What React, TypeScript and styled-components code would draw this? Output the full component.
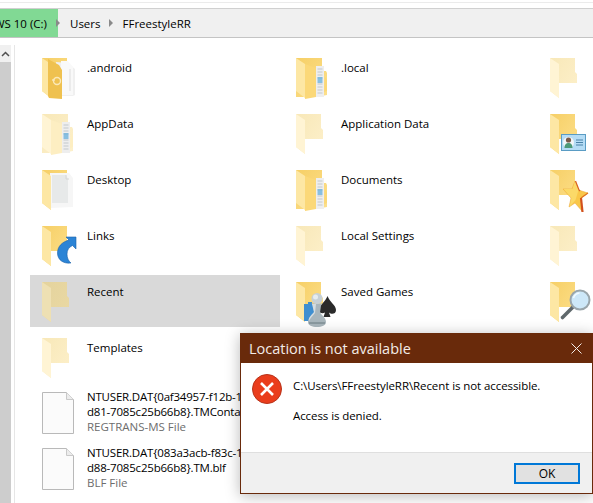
import React from "react";
import styled, { createGlobalStyle } from "styled-components";

type Tone = "normal" | "hidden" | "selected";
type Badge = "android" | "docs" | "desktop" | "shortcut" | "card" | "star" | "chess" | "lens";

const tones = {
	normal: { backA: "#f6cf66", backB: "#fde08c", flap: "#fde7a4", flapB: "#fbd878" },
	hidden: { backA: "#f8e8b8", backB: "#fdf0cb", flap: "#fff4d4", flapB: "#fdeec2" },
	selected: { backA: "#e4d39d", backB: "#ead9a4", flap: "#eee0b3", flapB: "#e8d8a4" }
};

const GlobalStyle = createGlobalStyle`
	html, body {
		margin: 0;
		background: #ffffff;
		overflow: hidden;
	}
	body {
		font-family: "Open Sans", "Noto Sans", sans-serif;
		font-size: 11.5px;
		color: #000000;
	}
`;

function DocSheet() {
	return (
		<g>
			<rect x="26" y="13" width="8" height="31" fill="#eeeeee" />
			<path d="M27.5 16h5M27.5 19h5M27.5 22h5M27.5 25h5M27.5 31h5M27.5 34h5M27.5 37h5M27.5 40h5" stroke="#c2c8cc" strokeWidth="1" />
			<rect x="27.5" y="24" width="5" height="6" fill="#6fb3dd" opacity="0.8" />
		</g>
	);
}

function Overlay({ badge }: { badge?: Badge }) {
	switch (badge) {
		case "android":
			return (
				<g>
					<path d="M20 9l12 1 7 6v26l-2 1H20z" fill="#f0f0f0" />
					<path d="M25 8h7l5 6v28H25z" fill="#f9f9f9" />
					<path d="M34 16v22" stroke="#dddddd" strokeWidth="1" />
					<path d="M12 9l11 6 3 5v29l-13-1-1-2z" fill="#efc14f" transform="translate(0 -3)" />
					<circle cx="21" cy="28" r="3.5" fill="none" stroke="#fbe9b8" strokeWidth="1.4" />
					<path d="M16 27h3" stroke="#fbe9b8" strokeWidth="1.4" />
				</g>
			);
		case "desktop":
			return (
				<g>
					<path d="M14 8h19l4 5v29l-23 1z" fill="#f6f6f6" />
					<path d="M16 10h14l2 4v24H16z" fill="#e7e9e9" />
					<path d="M30 10v4h3" fill="none" stroke="#d6d6d6" />
				</g>
			);
		case "shortcut":
			return (
				<g>
					<path d="M27 43l-2-12 6-7 9 1v16l-7 2z" fill="#ffffff" />
					<path d="M30 16h10v12l-3.500-3.500c-3.500 1.500-5.500 4.500-5.500 8.500 0 4 1.500 7 4 9-7.500 1-13.500-3-13.500-10 0-6.500 4.500-11 11.500-13z" fill="#2b84d6" stroke="#1c62a8" strokeWidth="0.6" />
				</g>
			);
		case "card":
			return (
				<g>
					<rect x="17.5" y="25.5" width="24" height="16" fill="#b5dcf5" stroke="#5a9cc4" />
					<circle cx="24.5" cy="33.5" r="5.5" fill="#f2f6f8" />
					<circle cx="24.5" cy="31" r="2.6" fill="#7a5a48" />
					<path d="M20.5 39c0-4 2-5 4-5s4 1 4 5z" fill="#4d9a78" />
					<path d="M32 31h7M32 33.5h7M32 36h7" stroke="#4a82a8" strokeWidth="1" />
				</g>
			);
		case "star":
			return (
				<g>
					<path d="M31 16l3.500 9 9.500 3-7 5 1 13-7-8-6 4 2-9-8-9 9 0z" fill="#f9c749" stroke="#eba437" strokeWidth="0.5" />
					<path d="M31 16l3.500 9-3 10-6 7 2-9-8-9 9 0z" fill="#fbd968" />
					<path d="M31.500 16l3.500 9 1 1" fill="none" stroke="#d9601f" strokeWidth="1.200" />
					<path d="M37 33l1.500 14" fill="none" stroke="#d2501c" strokeWidth="2.200" />
					<path d="M44 28l-7 5" fill="none" stroke="#e0741f" strokeWidth="1.200" />
				</g>
			);
		case "chess":
			return (
				<g>
					<path d="M14 27h4v-2h4v2h4v17H14z" fill="#3f8fd0" />
					<path d="M37.500 19c2 6 8.500 9 8.500 14 0 4-4.500 5-7 2.500l1.500 4.500h-7l1.500-4.500c-2 1.500-6 1-6-2.500 0-5 6.500-8 8.500-14z" fill="#2a2a2a" />
					<path d="M21.500 26.500h11l-1.500 2-1 7c2 3 6 5.500 6 9.500 0 3.500-4 5-9 5s-9-1.500-9-5c0-4 4-6.500 6-9.500l-1-7z" fill="#a9b6bc" />
					<path d="M22 27h4l-1 9c-2 3-5 5-6 8-1-4 3-6 5-9z" fill="#d4dce0" />
					<circle cx="27" cy="21.500" r="5.500" fill="#c6d0d5" />
					<circle cx="25.500" cy="20" r="2.500" fill="#e6ecef" />
					<path d="M19 46h16" stroke="#808f96" strokeWidth="1.500" />
				</g>
			);
		case "lens":
			return (
				<g>
					<path d="M28.500 30.500l-10 10" stroke="#5f686c" strokeWidth="3.600" strokeLinecap="round" />
					<circle cx="36" cy="23" r="9.500" fill="#cde8f8" stroke="#9aa6ab" strokeWidth="2" />
					<path d="M29.500 21a7 7 0 0 1 6-5" stroke="#f2fbff" strokeWidth="1.500" fill="none" />
				</g>
			);
		default:
			return null;
	}
}

function FolderIcon({ tone, badge }: { tone: Tone; badge?: Badge }) {
	const c = tones[tone];
	const id = `fold-${tone}`;
	const isDocs = badge === "docs";
	return (
		<IconSvg viewBox="0 0 48 48">
			<defs>
				<linearGradient id={id} x1="0" y1="0" x2="1" y2="1">
					<stop offset="0" stopColor={c.backA} />
					<stop offset="1" stopColor={c.backB} />
				</linearGradient>
			</defs>
			{isDocs ? (
				<g>
					<path d="M6 5h26v13l4 0 1 2v22l-11 2H6z" fill={`url(#${id})`} />
					<DocSheet />
					<path d="M35 24l2 3v11l-3 1z" fill={c.flapB} />
					<path d="M15 11l11 4v29l-11 2z" fill={c.flapB} />
					<path d="M6 5l9 6v34l-9-7z" fill={c.flap} />
				</g>
			) : (
				<g>
					<path d="M6 5h25v14l2 2v9H15v15L6 38z" fill={`url(#${id})`} />
					<Overlay badge={badge === "desktop" ? "desktop" : undefined} />
					<path d="M6 5l9 6v34l-9-7z" fill={c.flap} />
					{badge !== "desktop" && <Overlay badge={badge} />}
				</g>
			)}
		</IconSvg>
	);
}

function FileIcon() {
	return (
		<IconSvg viewBox="0 0 48 48">
			<path d="M6.500 3.500h24l7 7v34h-31z" fill="#fbfbfb" stroke="#b9b9b9" />
			<path d="M30.500 3.500v7h7" fill="#ececec" stroke="#c9c9c9" />
		</IconSvg>
	);
}

const folders: { name?: string; tone: Tone; badge?: Badge; selected?: boolean }[] = [
	{ name: ".android", tone: "normal", badge: "android" },
	{ name: ".local", tone: "normal", badge: "docs" },
	{ tone: "hidden" },
	{ name: "AppData", tone: "hidden", badge: "docs" },
	{ name: "Application Data", tone: "hidden" },
	{ tone: "normal", badge: "card" },
	{ name: "Desktop", tone: "normal", badge: "desktop" },
	{ name: "Documents", tone: "normal", badge: "docs" },
	{ tone: "normal", badge: "star" },
	{ name: "Links", tone: "normal", badge: "shortcut" },
	{ name: "Local Settings", tone: "hidden" },
	{ tone: "hidden" },
	{ name: "Recent", tone: "selected", selected: true },
	{ name: "Saved Games", tone: "normal", badge: "chess" },
	{ tone: "normal", badge: "lens" },
	{ name: "Templates", tone: "hidden" }
];

const files = [
	{ lines: ["NTUSER.DAT{0af34957-f12b-11e9-", "d81-7085c25b66b8}.TMContainer"], kind: "REGTRANS-MS File" },
	{ lines: ["NTUSER.DAT{083a3acb-f83c-11e9-", "d88-7085c25b66b8}.TM.blf"], kind: "BLF File" }
];

export default function App() {
	return (
		<>
			<GlobalStyle />
			<Page>
				<TopRule />
				<AddressBar>
					<DriveCrumb>WINDOWS 10 (C:)</DriveCrumb>
					<Chevron viewBox="0 0 8 8">
						<path d="M2 0l4 4-4 4z" />
					</Chevron>
					<Crumb>Users</Crumb>
					<Chevron viewBox="0 0 8 8">
						<path d="M2 0l4 4-4 4z" />
					</Chevron>
					<Crumb>FFreestyleRR</Crumb>
				</AddressBar>
				<Main>
					<Sidebar>
						<ScrollUp>
							<svg width="9" height="6" viewBox="0 0 9 6">
								<path d="M1 5l3.500-3.500L8 5" fill="none" stroke="#505050" strokeWidth="1.500" />
							</svg>
						</ScrollUp>
					</Sidebar>
					<PaneRule />
					<FileGrid>
						{folders.map((f, i) => (
							<Tile key={i} $selected={f.selected}>
								<FolderIcon tone={f.tone} badge={f.badge} />
								<Name>{f.name}</Name>
							</Tile>
						))}
						{files.map((f) => (
							<FileTile key={f.kind}>
								<FileIcon />
								<FileInfo>
									<FileName>{f.lines[0]}</FileName>
									<FileName>{f.lines[1]}</FileName>
									<Kind>{f.kind}</Kind>
								</FileInfo>
							</FileTile>
						))}
					</FileGrid>
				</Main>
				<Dialog>
					<TitleBar>
						<Title>Location is not available</Title>
						<svg width="11" height="11" viewBox="0 0 11 11">
							<path d="M.5.500l10 10M10.500.500l-10 10" stroke="#f4ece8" strokeWidth="1" />
						</svg>
					</TitleBar>
					<DialogBody>
						<svg width="32" height="32" viewBox="0 0 32 32">
							<circle cx="16" cy="16" r="14.500" fill="#ea3d1c" stroke="#b8331a" />
							<path d="M10 10l12 12M22 10L10 22" stroke="#ffffff" strokeWidth="2.600" />
						</svg>
						<Message>
							<MessageLine>C:\Users\FFreestyleRR\Recent is not accessible.</MessageLine>
							<MessageLine>Access is denied.</MessageLine>
						</Message>
					</DialogBody>
					<DialogFooter>
						<OkButton>OK</OkButton>
					</DialogFooter>
				</Dialog>
			</Page>
		</>
	);
}

const Page = styled.div`
	position: relative;
	display: flex;
	flex-direction: column;
	width: 593px;
	height: 503px;
	overflow: hidden;
`;

const TopRule = styled.div`
	height: 1px;
	margin-top: 2px;
	background: #ebebeb;
`;

const AddressBar = styled.div`
	display: flex;
	align-items: stretch;
	height: 28px;
	margin-top: 5px;
	background: #f0f0f0;
	border-top: 1px solid #d0d0d0;
	border-bottom: 1px solid #c4c4c4;
`;

const DriveCrumb = styled.div`
	display: flex;
	align-items: center;
	justify-content: flex-end;
	flex: none;
	width: 58px;
	padding-right: 11px;
	box-sizing: border-box;
	overflow: hidden;
	white-space: nowrap;
	background: #81d994;
`;

const Chevron = styled.svg`
	align-self: center;
	flex: none;
	width: 8px;
	height: 8px;
	margin: 0 8px 0 -4px;
	fill: #8a8a8a;
`;

const Crumb = styled.div`
	display: flex;
	align-items: center;
	padding-right: 10px;
`;

const Main = styled.div`
	display: flex;
	flex: 1;
	margin-top: 7px;
	min-height: 0;
`;

const Sidebar = styled.div`
	flex: none;
	width: 11px;
	background: #cdcdcd;
`;

const ScrollUp = styled.div`
	display: flex;
	align-items: center;
	justify-content: center;
	height: 17px;
	background: #f0f0f0;
`;

const PaneRule = styled.div`
	flex: none;
	width: 1px;
	margin-left: 3px;
	background: #e6e6e6;
`;

const FileGrid = styled.div`
	display: grid;
	grid-template-columns: repeat(3, 250px);
	grid-auto-rows: 52px;
	gap: 4px;
	padding: 6px 0 0 15px;
`;

const Tile = styled.div<{ $selected?: boolean }>`
	display: flex;
	align-items: flex-start;
	gap: 3px;
	padding: 2px 0 0 6px;
	background: ${(p) => (p.$selected ? "#d9d9d9" : "transparent")};
	min-width: 0;
`;

const FileTile = styled(Tile)`
	grid-column: 1;
`;

const IconSvg = styled.svg`
	flex: none;
	width: 48px;
	height: 48px;
	overflow: visible;
`;

const Name = styled.div`
	height: 15px;
	margin-top: 7px;
	line-height: 15px;
	white-space: nowrap;
	&:empty {
		display: none;
	}
`;

const FileInfo = styled.div`
	display: flex;
	flex-direction: column;
`;

const FileName = styled.div`
	height: 15px;
	line-height: 15px;
	letter-spacing: -0.2px;
	white-space: nowrap;
`;

const Kind = styled.div`
	height: 16px;
	line-height: 16px;
	color: #6d6d6d;
	white-space: nowrap;
`;

const Dialog = styled.div`
	position: absolute;
	left: 240px;
	top: 333px;
	display: flex;
	flex-direction: column;
	width: 353px;
	height: 161px;
	box-sizing: border-box;
	background: #ffffff;
	border: 1px solid #692a0b;
	box-shadow: 0 2px 14px rgba(0, 0, 0, 0.28);
`;

const TitleBar = styled.div`
	display: flex;
	align-items: center;
	justify-content: space-between;
	flex: none;
	height: 29px;
	padding: 0 10px 0 8px;
	background: #692a0b;
	color: #f3ece8;
`;

const Title = styled.div`
	font-size: 14.500px;
`;

const DialogBody = styled.div`
	display: flex;
	align-items: flex-start;
	flex: 1;
	gap: 10px;
	padding: 10px 10px 0 10px;
`;

const Message = styled.div`
	display: flex;
	flex-direction: column;
	gap: 15px;
	padding-top: 5px;
	letter-spacing: -0.08px;
`;

const MessageLine = styled.div`
	line-height: 15px;
	white-space: nowrap;
`;

const DialogFooter = styled.div`
	display: flex;
	align-items: center;
	justify-content: flex-end;
	flex: none;
	height: 40px;
	padding-right: 12px;
	background: #f0f0f0;
	border-top: 1px solid #dfdfdf;
`;

const OkButton = styled.button`
	width: 66px;
	height: 21px;
	padding: 0;
	background: #e1e1e1;
	border: 2px solid #0078d7;
	font: inherit;
	font-size: 12px;
	color: #000000;
`;
